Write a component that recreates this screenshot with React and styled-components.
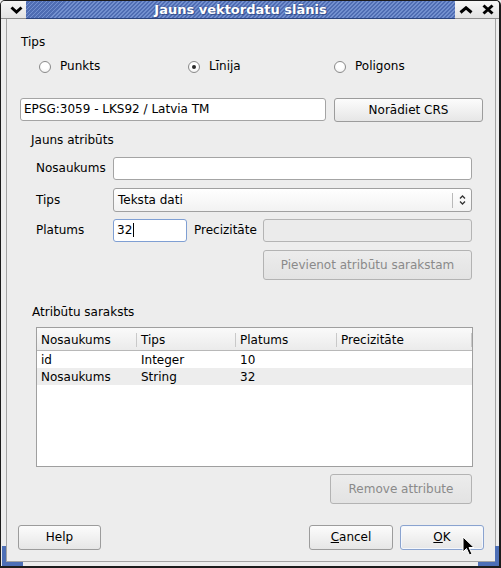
import React from 'react';
import styled, { createGlobalStyle, css } from 'styled-components';

const GlobalStyle = createGlobalStyle`
  html, body { margin: 0; padding: 0; background: #ededed; }
  body { font-family: "DejaVu Sans", "Liberation Sans", sans-serif; font-size: 12px; color: #000; }
  * { box-sizing: border-box; }
`;

const Window = styled.div`
  position: relative;
  width: 501px;
  height: 568px;
  border-style: solid;
  border-color: #1c1c1c;
  border-width: 1px 2px 2px 1px;
  border-radius: 5px 5px 0 0;
  background: #ededed;
  display: flex;
  flex-direction: column;
  overflow: hidden;
`;

const TitleBar = styled.div`
  display: flex;
  height: 18px;
  flex: none;
`;

const TitleButton = styled.div`
  width: ${p => p.$w}px;
  flex: none;
  display: flex;
  align-items: center;
  justify-content: center;
  padding-left: ${p => p.$pl || 0}px;
  background: linear-gradient(#f6f6f6, #e2e2e2);
  border-bottom: 1px solid #8e8e8e;
`;

const TitleBand = styled.div`
  flex: 1;
  background: repeating-linear-gradient(135deg, #7390cf 0px, #7390cf 1.4px, #4f6db3 1.4px, #4f6db3 2.83px);
  border-bottom: 1px solid #2a437d;
  color: #fff;
  font-weight: bold;
  font-size: 13px;
  line-height: 17px;
  text-align: center;
  text-shadow: 0 0 2px #2b447f, 1px 1px 0 #3a5494;
`;

const Frame = styled.div`
  flex: 1;
  display: flex;
  padding: 0 3px 4px 5px;
`;

const Content = styled.div`
  flex: 1;
  display: flex;
  flex-direction: column;
  border: 1px solid #a3a3a3;
  border-top: none;
  padding: 0 12px 0 13px;
  background: #ededed;
`;

const TextLine = styled.div`
  line-height: 15px;
  height: 15px;
  margin-top: ${p => p.$mt || 0}px;
  padding-left: ${p => p.$pl || 0}px;
  white-space: nowrap;
`;

const RadioRow = styled.div`
  display: grid;
  grid-template-columns: 149px 146px 1fr;
  margin-top: 9px;
  padding-left: 19px;
  height: 15px;
  line-height: 15px;
`;

const RadioItem = styled.div`
  display: flex;
  align-items: center;
  gap: 9px;
`;

const RadioCircle = styled.span`
  position: relative;
  width: 12px;
  height: 12px;
  border-radius: 50%;
  border: 1px solid #8a8a8a;
  background: radial-gradient(circle at 50% 35%, #ffffff 40%, #ececec 100%);
  ${p => p.$checked && css`
    &::after {
      content: "";
      position: absolute;
      left: 3px; top: 3px;
      width: 4px; height: 4px;
      border-radius: 50%;
      background: #2a2a2a;
    }
  `}
`;

const Row = styled.div`
  display: flex;
  align-items: flex-start;
  gap: ${p => p.$gap || 0}px;
  margin-top: ${p => p.$mt || 0}px;
  justify-content: ${p => p.$justify || 'flex-start'};
  margin-left: ${p => p.$ml || 0}px;
  margin-right: ${p => p.$mr || 0}px;
`;

const TextInput = styled.div`
  width: ${p => (p.$w ? `${p.$w}px` : 'auto')};
  flex: ${p => (p.$w ? 'none' : 1)};
  height: 23px;
  border: 1px solid ${p => (p.$focus ? '#7f9fd3' : p.$disabled ? '#b4b4b4' : '#a4a4a4')};
  border-radius: 3px;
  background: ${p => (p.$disabled ? '#ebebeb' : '#fff')};
  padding: 0 3px;
  line-height: 21px;
  white-space: nowrap;
  overflow: hidden;
`;

const Caret = styled.span`
  display: inline-block;
  width: 1px;
  height: 14px;
  background: #000;
  vertical-align: -3px;
  margin-left: 1px;
`;

const Button = styled.button`
  width: ${p => p.$w}px;
  height: ${p => p.$h}px;
  flex: none;
  padding: 0;
  font-family: inherit;
  font-size: 12px;
  color: ${p => (p.disabled ? '#8a8a8a' : '#000')};
  border: 1px solid ${p => (p.$default ? '#8aa3cf' : p.disabled ? '#b3b3b3' : '#9c9c9c')};
  border-radius: 3px;
  background: ${p => (p.disabled ? 'linear-gradient(#ececec, #e3e3e3)' : 'linear-gradient(#fcfcfc, #e6e6e6)')};
  box-shadow: ${p => (p.$default ? 'inset 0 0 0 1px #f4f7fc' : 'none')};
  text-align: center;
  line-height: ${p => p.$h - 2}px;
`;

const Group = styled.div`
  padding: 0 11px;
`;

const GroupBody = styled.div`
  padding-left: 5px;
  display: flex;
  flex-direction: column;
`;

const FormRow = styled.div`
  display: grid;
  grid-template-columns: ${p => p.$cols || '77px 1fr'};
  align-items: center;
  height: ${p => p.$h}px;
  margin-top: ${p => p.$mt}px;
  line-height: 15px;
  white-space: nowrap;
`;

const SideLabel = styled.span`
  padding-left: ${p => p.$pl || 0}px;
`;

const Combo = styled.div`
  height: 24px;
  display: flex;
  align-items: center;
  border: 1px solid #a0a0a0;
  border-radius: 3px;
  background: linear-gradient(#ffffff, #f2f2f2);
  padding-left: 4px;
`;

const ComboText = styled.span`
  flex: 1;
`;

const ComboSep = styled.span`
  width: 1px;
  height: 15px;
  background: #b9b9b9;
`;

const ComboArrows = styled.span`
  width: 18px;
  display: flex;
  justify-content: center;
  align-items: center;
`;

const Table = styled.div`
  margin-top: 7px;
  margin-right: -1px;
  height: 140px;
  border: 1px solid #9f9f9f;
  background: #fff;
  display: flex;
  flex-direction: column;
`;

const TableGrid = styled.div`
  display: grid;
  grid-template-columns: 100px 99px 101px 1fr;
`;

const HeadRow = styled(TableGrid)`
  height: 23px;
  background: linear-gradient(#fafafa, #ebebeb);
  border-bottom: 1px solid #b8b8b8;
`;

const HeadCell = styled.div`
  position: relative;
  padding: 5px 0 0 4px;
  line-height: 15px;
  &::after {
    content: "";
    position: absolute;
    right: 0;
    top: 5px;
    bottom: 3px;
    width: 1px;
    background: #c9c9c9;
  }
`;

const BodyRow = styled(TableGrid)`
  height: 17px;
  background: ${p => (p.$alt ? '#ededed' : '#fff')};
`;

const BodyCell = styled.div`
  padding: 2px 0 0 4px;
  line-height: 15px;
`;

const Spacer = styled.div`
  flex: 1;
`;

const ResizeCorner = styled.div`
  position: absolute;
  bottom: 0;
  ${p => (p.$side === 'left' ? 'left: 1px;' : 'right: 0;')}
  width: 21px;
  height: 20px;
  border-bottom: 4px solid #4d6fb6;
  ${p => (p.$side === 'left' ? 'border-left: 4px solid #4d6fb6;' : 'border-right: 4px solid #4d6fb6;')}
`;

const Pointer = styled.svg`
  position: absolute;
  left: 461px;
  top: 535px;
`;

export default function App() {
  return (
    <>
      <GlobalStyle />
      <Window>
        <TitleBar>
          <TitleButton $w={25} $pl={6}>
            <svg width="13" height="8" viewBox="0 0 13 8">
              <polyline points="1.5,1.5 6.5,6 11.5,1.5" fill="none" stroke="#000" strokeWidth="3" />
            </svg>
          </TitleButton>
          <TitleBand>Jauns vektordatu slānis</TitleBand>
          <TitleButton $w={21}>
            <svg width="14" height="8" viewBox="0 0 14 8">
              <polyline points="1.5,6.5 7,1.8 12.5,6.5" fill="none" stroke="#000" strokeWidth="3" />
            </svg>
          </TitleButton>
          <TitleButton $w={23}>
            <svg width="12" height="11" viewBox="0 0 12 11">
              <line x1="1.5" y1="1.5" x2="10.5" y2="9.5" stroke="#000" strokeWidth="3" />
              <line x1="10.5" y1="1.5" x2="1.5" y2="9.5" stroke="#000" strokeWidth="3" />
            </svg>
          </TitleButton>
        </TitleBar>
        <Frame>
          <Content>
            <TextLine $mt={16} $pl={1}>Tips</TextLine>
            <RadioRow>
              <RadioItem><RadioCircle />Punkts</RadioItem>
              <RadioItem><RadioCircle $checked />Līnija</RadioItem>
              <RadioItem><RadioCircle />Poligons</RadioItem>
            </RadioRow>
            <Row $mt={24} $gap={8}>
              <TextInput $w={306}>EPSG:3059 - LKS92 / Latvia TM</TextInput>
              <Button $w={149} $h={24}>Norādiet CRS</Button>
            </Row>
            <Group>
              <TextLine $mt={11}>Jauns atribūts</TextLine>
              <GroupBody>
                <FormRow $h={23} $mt={9}>
                  <span>Nosaukums</span>
                  <TextInput />
                </FormRow>
                <FormRow $h={24} $mt={8}>
                  <span>Tips</span>
                  <Combo>
                    <ComboText>Teksta dati</ComboText>
                    <ComboSep />
                    <ComboArrows>
                      <svg width="7" height="12" viewBox="0 0 7 12">
                        <polyline points="1,4.5 3.5,2 6,4.5" fill="none" stroke="#333" strokeWidth="1.3" />
                        <polyline points="1,7.5 3.5,10 6,7.5" fill="none" stroke="#333" strokeWidth="1.3" />
                      </svg>
                    </ComboArrows>
                  </Combo>
                </FormRow>
                <FormRow $h={23} $mt={7} $cols="77px 74px 76px 1fr">
                  <span>Platums</span>
                  <TextInput $focus>32<Caret /></TextInput>
                  <SideLabel $pl={7}>Precizitāte</SideLabel>
                  <TextInput $disabled />
                </FormRow>
                <Row $mt={8} $justify="flex-end">
                  <Button $w={209} $h={30} disabled>Pievienot atribūtu sarakstam</Button>
                </Row>
              </GroupBody>
            </Group>
            <Group>
              <TextLine $mt={25} $pl={1}>Atribūtu saraksts</TextLine>
              <GroupBody>
                <Table>
                  <HeadRow>
                    <HeadCell>Nosaukums</HeadCell>
                    <HeadCell>Tips</HeadCell>
                    <HeadCell>Platums</HeadCell>
                    <HeadCell>Precizitāte</HeadCell>
                  </HeadRow>
                  <BodyRow>
                    <BodyCell>id</BodyCell>
                    <BodyCell>Integer</BodyCell>
                    <BodyCell>10</BodyCell>
                    <BodyCell />
                  </BodyRow>
                  <BodyRow $alt>
                    <BodyCell>Nosaukums</BodyCell>
                    <BodyCell>String</BodyCell>
                    <BodyCell>32</BodyCell>
                    <BodyCell />
                  </BodyRow>
                </Table>
                <Row $mt={7} $justify="flex-end">
                  <Button $w={142} $h={30} disabled>Remove attribute</Button>
                </Row>
              </GroupBody>
            </Group>
            <Row $mt={21} $gap={7} $ml={-2} $mr={-1}>
              <Button $w={83} $h={25}>Help</Button>
              <Spacer />
              <Button $w={84} $h={25}><u>C</u>ancel</Button>
              <Button $w={84} $h={25} $default><u>O</u>K</Button>
            </Row>
          </Content>
        </Frame>
        <ResizeCorner $side="left" />
        <ResizeCorner $side="right" />
        <Pointer width="14" height="20" viewBox="0 0 14 20">
          <path d="M1,1 L1,16 L4.5,12.5 L7.5,19 L10,18 L7,11.5 L12,11.5 Z" fill="#000" stroke="#fff" strokeWidth="1" strokeLinejoin="round" />
        </Pointer>
      </Window>
    </>
  );
}
